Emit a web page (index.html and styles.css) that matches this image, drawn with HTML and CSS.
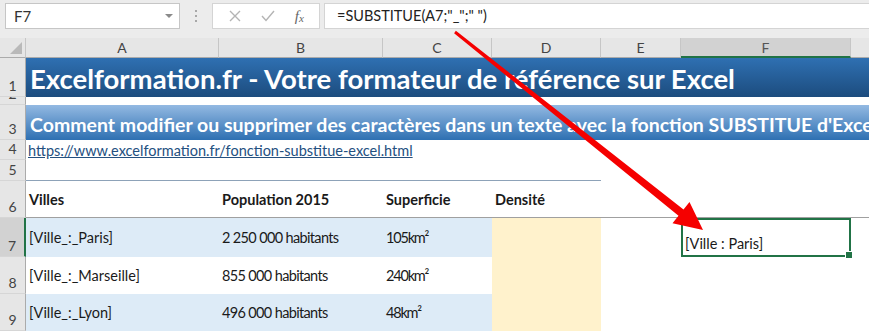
FILE: index.html
```html
<!DOCTYPE html>
<html lang="fr">
<head>
  <meta charset="UTF-8" />
  <title>SUBSTITUE – Excelformation.fr</title>
  <link rel="stylesheet" href="styles.css">
</head>
<body>
<div class="app">
  <div class="formula-bar">
    <div class="name-box">
      <span class="name-text">F7</span>
      <span class="caret"></span>
    </div>
    <div class="grip"><i></i><i></i><i></i></div>
    <div class="fx-buttons">
      <svg class="btn-icon" width="14" height="14" viewBox="0 0 14 14"><path d="M2 2 L12 12 M12 2 L2 12" stroke="#b4b4b4" stroke-width="1.4" fill="none"/></svg>
      <svg class="btn-icon" width="16" height="14" viewBox="0 0 16 14"><path d="M2 7 L6 11.5 L14 2" stroke="#b4b4b4" stroke-width="1.4" fill="none"/></svg>
      <span class="fx">f<sub>x</sub></span>
    </div>
    <div class="formula-input">=SUBSTITUE(A7;"_";" ")</div>
  </div>

  <div class="sheet">
    <!-- column headers -->
    <div class="corner"><span class="corner-tri"></span></div>
    <div class="col-head">A</div>
    <div class="col-head">B</div>
    <div class="col-head">C</div>
    <div class="col-head">D</div>
    <div class="col-head">E</div>
    <div class="col-head selected">F</div>
    <div class="col-head last"></div>

    <!-- row 1 -->
    <div class="row-head">1</div>
    <div class="title wide">Excelformation.fr - Votre formateur de référence sur Excel</div>

    <!-- row 2 -->
    <div class="row-head">2</div>
    <div class="wide"></div>

    <!-- row 3 -->
    <div class="row-head">3</div>
    <div class="subtitle wide">Comment modifier ou supprimer des caractères dans un texte avec la fonction SUBSTITUE d'Excel</div>

    <!-- row 4 -->
    <div class="row-head">4</div>
    <div class="link-cell wide"><a href="#">https://www.excelformation.fr/fonction-substitue-excel.html</a></div>

    <!-- row 5 -->
    <div class="row-head">5</div>
    <div class="rule"></div>
    <div class="rest"></div>

    <!-- row 6 -->
    <div class="row-head">6</div>
    <div class="cell head">Villes</div>
    <div class="cell head">Population 2015</div>
    <div class="cell head">Superficie</div>
    <div class="cell head">Densité</div>
    <div class="cell head"></div>
    <div class="cell head"></div>
    <div class="cell head"></div>

    <!-- row 7 -->
    <div class="row-head selected">7</div>
    <div class="cell blue">[Ville_:_Paris]</div>
    <div class="cell blue num">2 250 000 habitants</div>
    <div class="cell blue area">105km²</div>
    <div class="cell yellow"></div>
    <div class="cell"></div>
    <div class="cell active">[Ville : Paris]<span class="handle"></span></div>
    <div class="cell"></div>

    <!-- row 8 -->
    <div class="row-head">8</div>
    <div class="cell">[Ville_:_Marseille]</div>
    <div class="cell num">855 000 habitants</div>
    <div class="cell area">240km²</div>
    <div class="cell yellow"></div>
    <div class="cell"></div>
    <div class="cell"></div>
    <div class="cell"></div>

    <!-- row 9 -->
    <div class="row-head">9</div>
    <div class="cell blue">[Ville_:_Lyon]</div>
    <div class="cell blue num">496 000 habitants</div>
    <div class="cell blue area">48km²</div>
    <div class="cell yellow"></div>
    <div class="cell"></div>
    <div class="cell"></div>
    <div class="cell"></div>
  </div>

  <svg class="arrow" width="869" height="331" viewBox="0 0 869 331">
    <polygon points="455.9,30.8 683.5,209.5 689.5,202 703,230 672.5,223.2 678.5,215.7 454.1,33.2" fill="#f50000"/>
  </svg>
</div>
</body>
</html>
```

FILE: styles.css
```css
body {
  margin: 0;
  background-color: #fff;
  font-family: Lato, "Open Sans", sans-serif;
  color: #1a1a1a;
  overflow: hidden;
}
.app {
  position: relative;
  width: 869px;
  height: 331px;
  overflow: hidden;
}

/* formula bar */
.formula-bar {
  display: flex;
  align-items: flex-start;
  height: 38px;
  padding-top: 3px;
  box-sizing: border-box;
  background-color: #ececec;
}
.name-box {
  display: flex;
  align-items: center;
  justify-content: space-between;
  margin-left: 5px;
  width: 175px;
  height: 26px;
  box-sizing: border-box;
  border: 1px solid #c6c6c6;
  background-color: #fff;
  padding: 0 6px 0 8px;
}
.name-text {
  font-size: 15px;
  color: #333;
}
.caret {
  width: 0;
  height: 0;
  border-left: 4px solid transparent;
  border-right: 4px solid transparent;
  border-top: 4px solid #8a8a8a;
}
.grip {
  width: 32px;
  height: 26px;
  display: flex;
  flex-direction: column;
  align-items: center;
  justify-content: center;
  gap: 3px;
}
.grip i {
  width: 2px;
  height: 2px;
  background-color: #a8a8a8;
}
.fx-buttons {
  display: flex;
  align-items: center;
  justify-content: space-around;
  width: 108px;
  height: 26px;
  box-sizing: border-box;
  border: 1px solid #d4d4d4;
  background-color: #fff;
  padding: 0 6px;
}
.fx {
  font-family: "Liberation Serif", serif;
  font-style: italic;
  font-size: 15px;
  color: #666;
}
.fx sub {
  font-size: 11px;
  vertical-align: -1px;
}
.formula-input {
  flex: 1;
  margin-left: 4px;
  height: 26px;
  box-sizing: border-box;
  border: 1px solid #d4d4d4;
  border-right: none;
  background-color: #fff;
  padding-left: 12px;
  font-size: 14.5px;
  line-height: 24px;
  color: #222;
}

/* sheet grid */
.sheet {
  display: grid;
  grid-template-columns: 26px 193px 164px 109px 109px 80px 170px 1fr;
  grid-template-rows: 20px 39px 8px 35px 20px 21px 37px 39px 37px 37px;
}
.corner,
.col-head,
.row-head {
  background-color: #e6e6e6;
  color: #444;
  font-size: 14px;
  box-sizing: border-box;
}
.corner {
  position: relative;
  border-right: 1px solid #c6c6c6;
  border-bottom: 1px solid #ababab;
}
.corner-tri {
  position: absolute;
  right: 3px;
  bottom: 3px;
  width: 12px;
  height: 12px;
  background-color: #b9b9b9;
  clip-path: polygon(100% 0, 100% 100%, 0 100%);
}
.col-head {
  display: flex;
  align-items: center;
  justify-content: center;
  border-right: 1px solid #c6c6c6;
  border-bottom: 1px solid #ababab;
}
.col-head.selected {
  background-color: #d2d2d2;
  border-bottom: 2px solid #217346;
  color: #555;
}
.col-head.last {
  border-right: none;
}
.row-head {
  display: flex;
  align-items: flex-end;
  justify-content: center;
  overflow: hidden;
  line-height: 16px;
  padding-bottom: 2px;
  border-right: 1px solid #ababab;
  border-bottom: 1px solid #d6d6d6;
}
.row-head.selected {
  background-color: #d2d2d2;
  border-right: 2px solid #217346;
}

.wide {
  grid-column: 2 / -1;
  white-space: nowrap;
  overflow: hidden;
}
.title {
  display: flex;
  align-items: flex-end;
  padding-left: 4px;
  background: linear-gradient(to bottom, #2f70b2, #1c4c7e);
  color: #fff;
  font-weight: bold;
  font-size: 27.5px;
  line-height: 36px;
}
.subtitle {
  display: flex;
  align-items: flex-end;
  padding-left: 4px;
  background: linear-gradient(to bottom, #93b9e2, #2e70b2);
  color: #fff;
  font-weight: bold;
  font-size: 19.5px;
  line-height: 30px;
}
.link-cell {
  display: flex;
  align-items: flex-end;
  padding-left: 2px;
  font-size: 14.5px;
  line-height: 18px;
}
.link-cell a {
  color: #24507f;
}
.rule {
  grid-column: 2 / 6;
  border-bottom: 1px solid #8da2b8;
}
.rest {
  grid-column: 6 / -1;
}

.cell {
  display: flex;
  align-items: center;
  padding-left: 3px;
  font-size: 14.5px;
  white-space: nowrap;
  box-sizing: border-box;
}
.cell.num {
  letter-spacing: -0.65px;
}
.cell.area {
  letter-spacing: -1.2px;
}
.cell.head {
  font-weight: bold;
  border-bottom: 1px solid #a0a0a0;
}
.cell.blue {
  background-color: #ddebf7;
}
.cell.yellow {
  background-color: #fff2cc;
}
.cell.active {
  position: relative;
  align-items: flex-end;
  padding: 0 0 3px 2px;
  border: 2px solid #217346;
}
.handle {
  position: absolute;
  right: -4px;
  bottom: -4px;
  width: 6px;
  height: 6px;
  background-color: #217346;
  border: 1px solid #fff;
}

.arrow {
  position: absolute;
  top: 0;
  left: 0;
  pointer-events: none;
}
```
